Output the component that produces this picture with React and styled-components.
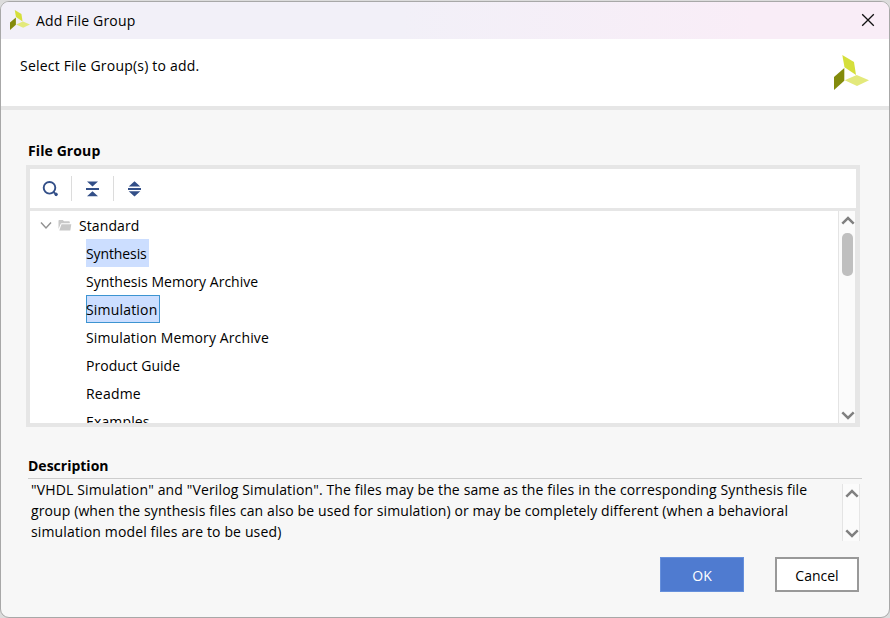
import React from "react";
import styled, { createGlobalStyle, css } from "styled-components";

const GlobalStyle = createGlobalStyle`
  * { box-sizing: border-box; }
  body {
    margin: 0;
    overflow: hidden;
    background: #dcdcdc;
    color: #000;
    font-family: "Open Sans", "Noto Sans", sans-serif;
    font-size: 14px;
  }
`;

const Dialog = styled.div`
  width: 890px;
  height: 617px;
  margin-top: 1px;
  display: flex;
  flex-direction: column;
  overflow: hidden;
  background: #f7f7f7;
  border: 1px solid #a8a8a8;
  border-radius: 9px;
`;

const TitleBar = styled.header`
  height: 37px;
  flex: none;
  display: flex;
  align-items: center;
  padding: 0 14px 1px 9px;
  background: linear-gradient(90deg, #f2f0f8 45%, #f9edf7 85%);
`;

const Title = styled.div`
  flex: 1;
  margin-left: 6px;
`;

const CloseButton = styled.button`
  width: 14px;
  height: 14px;
  padding: 0;
  border: 0;
  background: none;
  display: flex;
`;

const Banner = styled.div`
  height: 71px;
  flex: none;
  display: flex;
  align-items: flex-start;
  justify-content: space-between;
  padding: 16px 20px 0 19px;
  background: #fff;
  border-bottom: 4px solid #e6e6e6;
`;

const Body = styled.main`
  flex: 1;
  display: flex;
  flex-direction: column;
  padding: 30px 27px 0;
`;

const Text = styled.span`
  white-space: nowrap;
  line-height: 21px;
  letter-spacing: ${(p) => p.$spacing || 0}px;
`;

const Heading = styled.h2`
  margin: 0;
  font-size: 14px;
  font-weight: 700;
  line-height: 21px;
  letter-spacing: ${(p) => p.$spacing || 0}px;
`;

const Panel = styled.section`
  width: 834px;
  height: 262px;
  margin: 4px 0 0 -2px;
  flex: none;
  border: 4px solid #e6e6e6;
  background: #fff;
  display: flex;
  flex-direction: column;
`;

const Toolbar = styled.div`
  height: 42px;
  flex: none;
  display: flex;
  align-items: center;
  border-bottom: 3px solid #e6e6e6;
`;

const ToolButton = styled.button`
  width: 42px;
  height: 25px;
  padding: 0;
  border: 0;
  background: none;
  display: flex;
  align-items: center;
  justify-content: center;
  border-right: 1px solid #dcdcdc;

  &:last-child { border-right-color: transparent; }
`;

const ListArea = styled.div`
  flex: 1;
  min-height: 0;
  display: flex;
  justify-content: space-between;
`;

const Tree = styled.div`
  height: 212px;
  overflow: hidden;
`;

const Row = styled.div`
  height: 28px;
  display: flex;
  align-items: center;
  padding-left: ${(p) => (p.$level ? 56 : 10)}px;
`;

const NodeLabel = styled.span`
  height: 28px;
  width: ${(p) => (p.$width ? `${p.$width}px` : "auto")};
  white-space: nowrap;
  line-height: 29px;
  letter-spacing: ${(p) => p.$spacing || 0}px;
  ${(p) => p.$selected && css`background: #ccdeff;`}
  ${(p) => p.$focused && css`box-shadow: inset 0 0 0 1px #3d94d1;`}
`;

const FolderLabel = styled(NodeLabel)`
  margin-left: 7px;
`;

const ScrollTrack = styled.div`
  width: ${(p) => p.$width}px;
  flex: none;
  display: flex;
  flex-direction: column;
  align-items: center;
  padding: ${(p) => p.$pad};
  background: #fbfbfb;
  border-left: 1px solid #e4e4e4;
  border-right: 1px solid #e6e6e6;
`;

const Thumb = styled.div`
  width: 11px;
  height: 43px;
  margin: 8px 2px 0 0;
  border-radius: 5px;
  background: #bfbfbf;
`;

const Spacer = styled.div`
  flex: 1;
`;

const DescriptionHeading = styled(Heading)`
  margin-top: 28px;
`;

const Description = styled.section`
  width: 834px;
  height: 64px;
  flex: none;
  margin-top: 2px;
  padding-left: 3px;
  border-top: 1px solid #cdcdcd;
  display: flex;
  justify-content: space-between;
`;

const Lines = styled.div`
  display: flex;
  flex-direction: column;
`;

const DescriptionScroll = styled.div`
  display: flex;
  padding: 5px 2px 1px 0;
`;

const Footer = styled.footer`
  display: flex;
  justify-content: flex-end;
  gap: 31px;
  padding: 15px 3px 0 0;
`;

const Button = styled.button`
  width: 84px;
  height: 35px;
  padding: 1px 0 0;
  font: inherit;
  color: ${(p) => (p.$primary ? "#fff" : "#000")};
  background: ${(p) => (p.$primary ? "#4f7bd0" : "#fff")};
  border: ${(p) => (p.$primary ? "1px solid #6690dc" : "2px solid #999")};
`;

const Logo = ({ size, height = size }) => (
  <svg width={size} height={height} viewBox="0 0 35 35" preserveAspectRatio="none">
    <path d="M8.3 0 20 7 22 20 10.5 12.3Z" fill="#d5df3b" />
    <path d="M10.3 13V25.8L0 35V22Z" fill="#838b0c" />
    <path d="M10.7 25.3 22.7 20 35 25.3 23 31Z" fill="#e3e97b" />
  </svg>
);

const Chevron = ({ down }) => (
  <svg width="14" height="9" viewBox="0 0 14 9" fill="none" stroke="#808080" strokeWidth="2.5">
    <path d={down ? "M1.3 1.4 7 7 12.7 1.4" : "M1.3 7.6 7 2 12.7 7.6"} />
  </svg>
);

const SearchIcon = () => (
  <svg width="17" height="16" viewBox="0 0 17 16" fill="none" stroke="#334f88">
    <circle cx="7.5" cy="6.8" r="5.8" strokeWidth="1.9" />
    <path d="M11.5 11l1.6 1.4" strokeWidth="2" />
    <circle cx="14.1" cy="13.4" r="1.3" fill="#334f88" strokeWidth="1" />
  </svg>
);

const CollapseIcon = () => (
  <svg width="13" height="16" viewBox="0 0 13 16" fill="#334f88">
    <path d="M1 .5H12L6.5 5.5ZM0 7H13V9H0ZM6.5 10.3 12 15.3H1Z" />
  </svg>
);

const ExpandIcon = () => (
  <svg width="13" height="16" viewBox="0 0 13 16" fill="#334f88">
    <path d="M6.5 .3 12.3 5.5H.7ZM0 7H13V9H0ZM.7 10.3H12.3L6.5 15.5Z" />
  </svg>
);

const Disclosure = () => (
  <svg width="12" height="8" viewBox="0 0 12 8" fill="none" stroke="#929292" strokeWidth="1.5">
    <path d="M1 1.6 6 6.9 11 1.6" />
  </svg>
);

const Folder = styled.svg`
  margin-left: 6px;
`;

const nodes = [
  { name: "Synthesis", selected: true, width: 63, spacing: -0.1 },
  { name: "Synthesis Memory Archive", spacing: 0.02 },
  { name: "Simulation", selected: true, focused: true, width: 74, spacing: 0.18 },
  { name: "Simulation Memory Archive", spacing: 0.13 },
  { name: "Product Guide", spacing: 0.02 },
  { name: "Readme", spacing: 0.2 },
  { name: "Examples", spacing: 0.15 },
];

export default function App() {
  return (
    <>
      <GlobalStyle />
      <Dialog>
        <TitleBar>
          <Logo size={20} height={20} />
          <Title><Text $spacing={0.18}>Add File Group</Text></Title>
          <CloseButton aria-label="Close">
            <svg width="14" height="14" viewBox="0 0 14 14" stroke="#111" strokeWidth="1.3">
              <path d="M1.2 1.2 12.8 12.8M12.8 1.2 1.2 12.8" />
            </svg>
          </CloseButton>
        </TitleBar>
        <Banner>
          <Text $spacing={0.2}>Select File Group(s) to add.</Text>
          <Logo size={35} />
        </Banner>
        <Body>
          <Heading $spacing={0.1}>File Group</Heading>
          <Panel>
            <Toolbar>
              <ToolButton aria-label="Search"><SearchIcon /></ToolButton>
              <ToolButton aria-label="Collapse all"><CollapseIcon /></ToolButton>
              <ToolButton aria-label="Expand all"><ExpandIcon /></ToolButton>
            </Toolbar>
            <ListArea>
              <Tree>
                <Row>
                  <Disclosure />
                  <Folder width="14" height="12" viewBox="0 0 14 12" fill="#c8c8c8">
                    <path d="M.5 10V1.8Q.5 1 1.3 1H4.8L6 2.3H11Q11.8 2.3 11.8 3.2V4.3H3.7Q2.8 4.3 2.5 5.2Z" />
                    <path d="M3.5 5.3H13.3L12.3 11.5H1.3Z" />
                  </Folder>
                  <FolderLabel $spacing={0.1}>Standard</FolderLabel>
                </Row>
                {nodes.map((n) => (
                  <Row key={n.name} $level={1}>
                    <NodeLabel $selected={n.selected} $focused={n.focused} $width={n.width} $spacing={n.spacing}>
                      {n.name}
                    </NodeLabel>
                  </Row>
                ))}
              </Tree>
              <ScrollTrack $width={18} $pad="5px 0 3px 2px">
                <Chevron />
                <Thumb />
                <Spacer />
                <Chevron down />
              </ScrollTrack>
            </ListArea>
          </Panel>
          <DescriptionHeading>Description</DescriptionHeading>
          <Description>
            <Lines>
              <Text $spacing={0.137}>"VHDL Simulation" and "Verilog Simulation". The files may be the same as the files in the corresponding Synthesis file</Text>
              <Text $spacing={0.108}>group (when the synthesis files can also be used for simulation) or may be completely different (when a behavioral</Text>
              <Text $spacing={0.14}>simulation model files are to be used)</Text>
            </Lines>
            <DescriptionScroll>
              <ScrollTrack $width={18} $pad="5px 0 3px 2px">
                <Chevron />
                <Spacer />
                <Chevron down />
              </ScrollTrack>
            </DescriptionScroll>
          </Description>
          <Footer>
            <Button $primary>OK</Button>
            <Button>Cancel</Button>
          </Footer>
        </Body>
      </Dialog>
    </>
  );
}
